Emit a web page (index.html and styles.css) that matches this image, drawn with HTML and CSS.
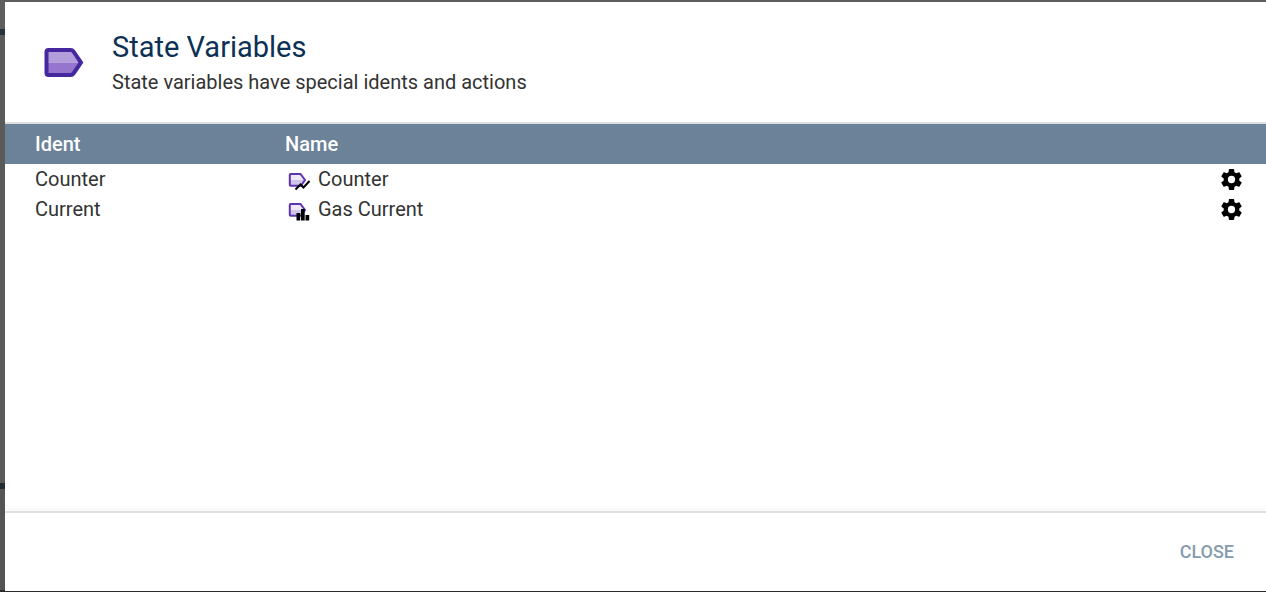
FILE: index.html
```
<!DOCTYPE html>
<html lang="en">
<head>
    <meta charset="UTF-8">
    <meta name="viewport" content="width=device-width, initial-scale=1.0">
    <title>State Variables</title>
    <link rel="stylesheet" href="styles.css">
</head>
<body>
    <div class="dialog" role="dialog" aria-labelledby="dialogTitle">
        <header class="header">
            <svg class="logo" viewBox="0 0 40 30" aria-hidden="true">
                <path d="M3 3H28L37 15.500H3Z" fill="#b39ddb"/>
                <path d="M3 15.500H37L28 28H3Z" fill="#9575cd"/>
                <path d="M4.500 3H26.500Q28.500 3 29.500 4.500L37 15.500L29.500 26.500Q28.500 28 26.500 28H4.500Q2.500 28 2.500 26V5Q2.500 3 4.500 3Z" fill="none" stroke="#4527a0" stroke-width="4"/>
            </svg>
            <div>
                <h1 id="dialogTitle">State Variables</h1>
                <p>State variables have special idents and actions</p>
            </div>
        </header>
        <main class="content">
            <table>
                <thead>
                    <tr>
                        <th class="ident">Ident</th>
                        <th>Name</th>
                        <th class="action"></th>
                    </tr>
                </thead>
                <tbody>
                    <tr>
                        <td>Counter</td>
                        <td>
                            <div class="name">
                                <svg class="tag" viewBox="0 0 26 26" aria-hidden="true">
                                    <path d="M5 8H16L20 14L16 20H5Z" fill="#ede7f6"/>
                                    <path d="M5 14H20L16 20H5Z" fill="#d1c4e9"/>
                                    <path d="M5.500 8H15.500L20 14L16 19.800H5.500Q4.800 19.800 4.800 19V8.800Q4.800 8 5.500 8Z" fill="none" stroke="#5e35b1" stroke-width="2"/>
                                    <path d="M10.500 23.500L15.500 18.500L18.500 21.500L24.500 15" fill="none" stroke="#000" stroke-width="2"/>
                                </svg>
                                Counter
                            </div>
                        </td>
                        <td>
                            <button class="gear" aria-label="Counter actions">
                                <svg viewBox="0 0 24 24"><use href="#cog"/></svg>
                            </button>
                        </td>
                    </tr>
                    <tr>
                        <td>Current</td>
                        <td>
                            <div class="name">
                                <svg class="tag" viewBox="0 0 26 26" aria-hidden="true">
                                    <path d="M5 8H16L20 14L16 20H5Z" fill="#ede7f6"/>
                                    <path d="M5 14H20L16 20H5Z" fill="#d1c4e9"/>
                                    <path d="M5.500 8H15.500L20 14L16 19.800H5.500Q4.800 19.800 4.800 19V8.800Q4.800 8 5.500 8Z" fill="none" stroke="#5e35b1" stroke-width="2"/>
                                    <path d="M11.500 17H15.200V24.500H11.500ZM16 13H19.700V24.500H16ZM20.500 19H24.200V24.500H20.500Z" fill="#000"/>
                                </svg>
                                Gas Current
                            </div>
                        </td>
                        <td>
                            <button class="gear" aria-label="Current actions">
                                <svg viewBox="0 0 24 24"><use href="#cog"/></svg>
                            </button>
                        </td>
                    </tr>
                </tbody>
            </table>
        </main>
        <footer class="footer">
            <button class="close">CLOSE</button>
        </footer>
    </div>

    <svg class="symbols" width="0" height="0" aria-hidden="true">
        <symbol id="cog" viewBox="0 0 24 24">
            <path d="M12 15.500A3.500 3.500 0 0 1 8.500 12 3.500 3.500 0 0 1 12 8.500a3.500 3.500 0 0 1 3.500 3.500 3.500 3.500 0 0 1-3.500 3.500m7.430-2.530c.04-.32.07-.64.07-.97s-.03-.66-.07-1l2.110-1.630c.19-.15.24-.42.12-.64l-2-3.460c-.12-.22-.39-.31-.61-.22l-2.490 1c-.52-.39-1.060-.73-1.690-.98l-.37-2.650A.506.506 0 0 0 14 2h-4c-.25 0-.46.18-.5.42l-.37 2.650c-.63.25-1.170.59-1.690.98l-2.490-1c-.22-.09-.49 0-.61.22l-2 3.460c-.13.22-.07.49.12.64L4.570 11c-.04.34-.07.67-.07 1s.03.65.07.97l-2.110 1.660c-.19.15-.25.42-.12.64l2 3.460c.12.22.39.3.61.22l2.490-1.010c.52.4 1.060.74 1.690.99l.37 2.650c.04.24.25.42.5.42h4c.25 0 .46-.18.5-.42l.37-2.650c.63-.26 1.170-.59 1.690-.99l2.490 1.010c.22.08.49 0 .61-.22l2-3.460c.12-.22.07-.49-.12-.64z"/>
        </symbol>
    </svg>
</body>
</html>
```
FILE: styles.css
```
*{
    box-sizing: border-box;
}
body{
    margin: 0;
    height: 100vh;
    padding: 2px 0 1px 5px;
    display: flex;
    font-family: Roboto, sans-serif;
    font-size: 20px;
    color: #333;
    background: linear-gradient(#5e5e5e 29px, #26323a 29px, #26323a 35px, #5a5a5a 35px, #5a5a5a 483px, #222c33 483px, #222c33 489px, #555 489px, #555 590px, #2b2b2b 590px);
}
h1, p{
    margin: 0;
}
button{
    border: 0;
    background: none;
    font-family: inherit;
    cursor: pointer;
}
.dialog{
    flex: 1;
    display: flex;
    flex-direction: column;
    background-color: white;
}
.header{
    display: flex;
    align-items: center;
    gap: 28px;
    height: 122px;
    padding: 0 39px;
    border-bottom: 2px solid #e0e0e0;
}
.logo{
    width: 40px;
    height: 30px;
}
h1{
    font-size: 29px;
    line-height: 40px;
    font-weight: 400;
    color: #0d3155;
}
p{
    line-height: 30px;
}
.content{
    flex: 1;
}
table{
    width: 100%;
    border-collapse: collapse;
    table-layout: fixed;
}
th, td{
    padding: 0 0 0 30px;
    text-align: left;
    line-height: 30px;
}
th{
    height: 40px;
    font-weight: 500;
    color: white;
    background-color: #6b8299;
}
td{
    height: 30px;
}
.ident{
    width: 250px;
}
.action{
    width: 77px;
}
.name{
    display: flex;
    align-items: center;
    gap: 7px;
}
.tag{
    width: 26px;
    height: 26px;
}
.gear{
    display: flex;
    padding: 0;
}
.gear svg{
    width: 25px;
    height: 25px;
}
.footer{
    display: flex;
    align-items: center;
    justify-content: flex-end;
    height: 80px;
    padding: 0 16px;
    border-top: 2px solid #e0e0e0;
    box-shadow: 0 -2px 6px rgba(0, 0, 0, 0.04);
}
.close{
    padding: 8px 16px;
    font-size: 18px;
    line-height: 20px;
    font-weight: 500;
    color: #869bae;
}
.symbols{
    position: absolute;
}
```
